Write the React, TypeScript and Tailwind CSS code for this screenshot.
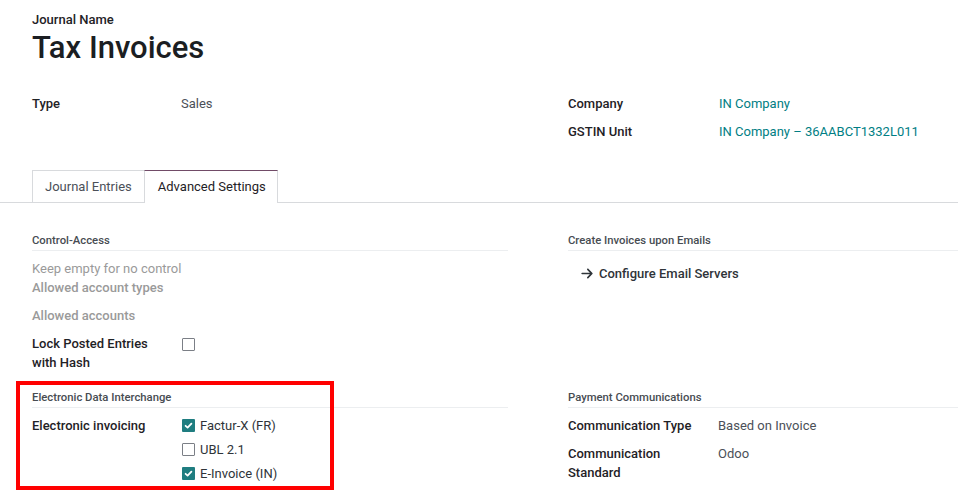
import React from 'react';

function Checkbox({ checked }: { checked: boolean }) {
  return checked ? (
    <span className="inline-flex w-[13px] h-[13px] shrink-0 items-center justify-center rounded-[1px] bg-[#1f7d80]">
      <svg viewBox="0 0 13 13" className="w-[13px] h-[13px]">
        <path d="M3.6 6.8 L5.6 8.6 L9.4 4.6" fill="none" stroke="white" strokeWidth="1.8" strokeLinecap="round" strokeLinejoin="round" />
      </svg>
    </span>
  ) : (
    <span className="inline-block w-[13px] h-[13px] shrink-0 rounded-[1px] border border-[#7b7f86] bg-white" />
  );
}

function SectionHeader({ children }: { children: React.ReactNode }) {
  return (
    <div className="text-[11.3px] leading-[18px] font-medium text-[#474c52] border-b border-[#eceef0]">
      {children}
    </div>
  );
}

function Field({ label, children }: { label: React.ReactNode; children?: React.ReactNode }) {
  return (
    <div className="flex">
      <div className="w-[150px] shrink-0 font-medium text-[#1f2226] leading-[19px]">{label}</div>
      <div className="flex-1 leading-[19px]">{children}</div>
    </div>
  );
}

export default function App() {
  return (
    <div className="min-h-[500px] w-[958px] overflow-hidden bg-white font-['Roboto'] text-[13px] text-[#212529]">
      {/* Title */}
      <div className="pl-8 pt-[10px]">
        <div className="font-medium leading-5 text-[#1f2226]">Journal Name</div>
        <h1 className="text-[31px] leading-9 font-medium text-[#1b1e22]">Tax Invoices</h1>
      </div>

      {/* Top fields */}
      <div className="grid grid-cols-[476px_1fr] gap-x-[60px] pl-8 mt-6">
        <div>
          <div className="flex h-7 items-center">
            <div className="w-[149px] font-medium text-[#1f2226]">Type</div>
            <div className="text-[#4b5058]">Sales</div>
          </div>
        </div>
        <div>
          <div className="flex h-7 items-center">
            <div className="w-[151px] font-medium text-[#1f2226]">Company</div>
            <div className="text-[#017e84]">IN Company</div>
          </div>
          <div className="flex h-7 items-center">
            <div className="w-[151px] font-medium text-[#1f2226]">GSTIN Unit</div>
            <div className="text-[#017e84]">IN Company – 36AABCT1332L011</div>
          </div>
        </div>
      </div>

      {/* Tabs */}
      <div className="mt-6 flex border-b border-[#d8dadd] pl-8">
        <div className="flex h-8 items-center border-t border-l border-[#d8dadd] px-[12px] text-[#4b5058]">
          Journal Entries
        </div>
        <div className="-mb-px flex h-[33px] items-center border-t border-l border-r border-t-[#714b67] border-l-[#d8dadd] border-r-[#d8dadd] bg-white pl-[13px] pr-[11px] text-[#1f2226]">
          Advanced Settings
        </div>
      </div>

      {/* Settings */}
      <div className="grid grid-cols-[476px_1fr] gap-x-[60px] pl-8 pt-[29px]">
        {/* Control-Access */}
        <div>
          <SectionHeader>Control-Access</SectionHeader>
          <div className="mt-2 leading-[19px] text-[#9a9a9a]">Keep empty for no control</div>
          <div className="leading-[19px] font-medium text-[#9a9a9a]">Allowed account types</div>
          <div className="mt-[9px] leading-[19px] font-medium text-[#9a9a9a]">Allowed accounts</div>
          <div className="mt-[9px]">
            <Field label={<>Lock Posted Entries<br />with Hash</>}>
              <div className="pt-[3px]">
                <Checkbox checked={false} />
              </div>
            </Field>
          </div>
        </div>

        {/* Create Invoices upon Emails */}
        <div>
          <SectionHeader>Create Invoices upon Emails</SectionHeader>
          <div className="mt-[13px] flex items-center pl-[13px] leading-[19px] font-medium text-[#2f3439]">
            <svg viewBox="0 0 448 512" className="mr-[6px] h-[13px] w-[12px] fill-[#2f3439]">
              <path d="M438.6 278.6c12.5-12.5 12.5-32.8 0-45.3l-160-160c-12.5-12.5-32.8-12.5-45.3 0s-12.5 32.8 0 45.3L338.8 224 32 224c-17.7 0-32 14.3-32 32s14.3 32 32 32l306.7 0L233.4 393.4c-12.5 12.5-12.5 32.8 0 45.3s32.8 12.5 45.3 0l160-160z" />
            </svg>
            Configure Email Servers
          </div>
        </div>

        {/* Electronic Data Interchange */}
        <div className="relative mt-[17px]">
          <SectionHeader>Electronic Data Interchange</SectionHeader>
          <div className="mt-2">
            <Field label="Electronic invoicing">
              <div className="flex flex-col gap-[5px]">
                <label className="flex items-center gap-[5px] text-[#2f3439]"><Checkbox checked /> Factur-X (FR)</label>
                <label className="flex items-center gap-[5px] text-[#2f3439]"><Checkbox checked={false} /> UBL 2.1</label>
                <label className="flex items-center gap-[5px] text-[#2f3439]"><Checkbox checked /> E-Invoice (IN)</label>
              </div>
            </Field>
          </div>
          <div className="pointer-events-none absolute -left-4 -top-2 h-[109px] w-[318px] border-4 border-[#ff0000]" />
        </div>

        {/* Payment Communications */}
        <div className="mt-[17px]">
          <SectionHeader>Payment Communications</SectionHeader>
          <div className="mt-2 flex flex-col gap-[9px]">
            <Field label="Communication Type">
              <span className="text-[#4b5058]">Based on Invoice</span>
            </Field>
            <Field label={<>Communication<br />Standard</>}>
              <span className="text-[#4b5058]">Odoo</span>
            </Field>
          </div>
        </div>
      </div>
    </div>
  );
}
